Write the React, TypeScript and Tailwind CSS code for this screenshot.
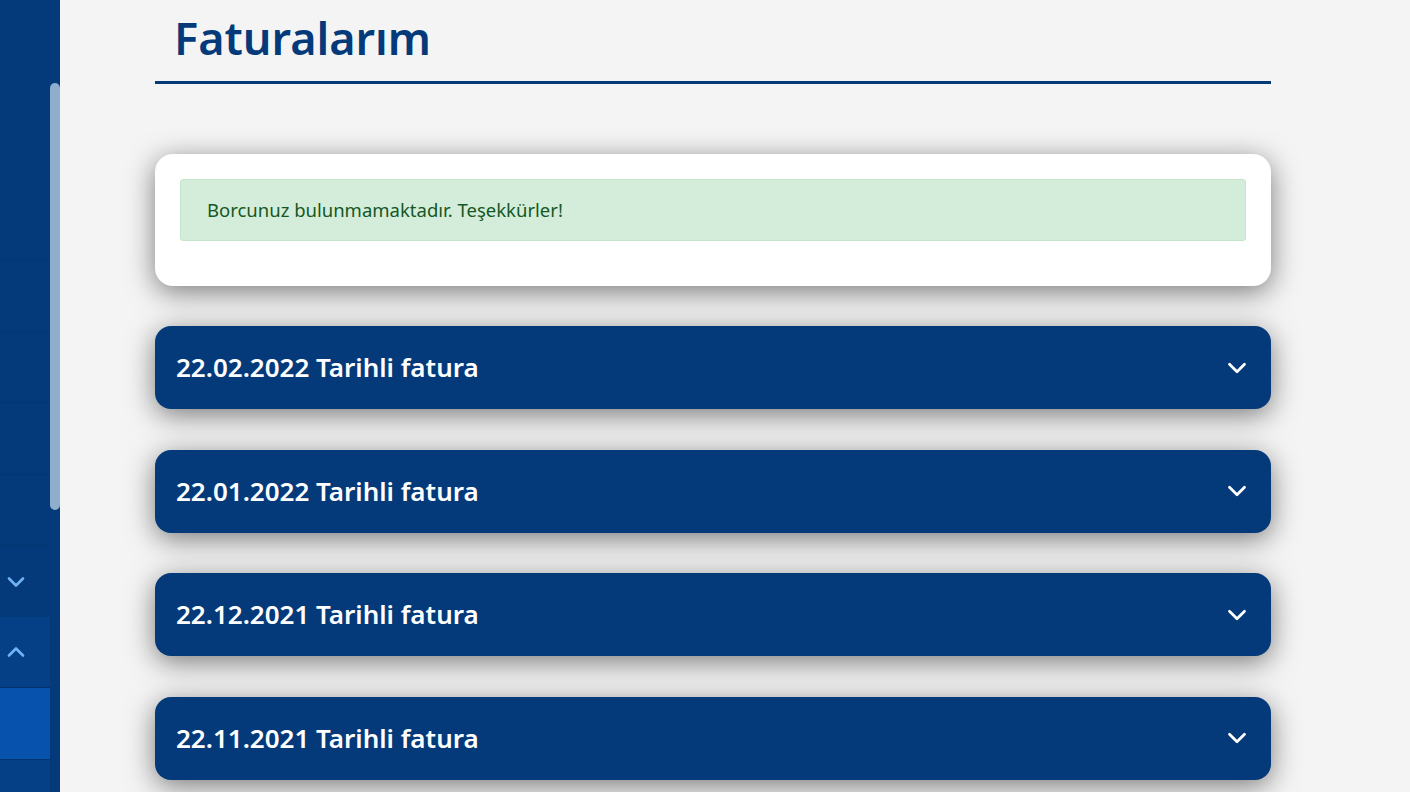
import React from "react";
import { ChevronDown, ChevronUp } from "lucide-react";

const invoices = [
  "22.02.2022 Tarihli fatura",
  "22.01.2022 Tarihli fatura",
  "22.12.2021 Tarihli fatura",
  "22.11.2021 Tarihli fatura",
];

const font = { fontFamily: '"Noto Sans", "Open Sans", sans-serif' };

const Sidebar: React.FC = () => (
  <aside className="relative h-[792px] w-[60px] shrink-0 bg-[#043a7a]">
    <div className="flex w-[50px] flex-col">
      <div className="h-[260px]" />
      <div className="h-[71px] border-t border-[#03356f]" />
      <div className="h-[71px] border-t border-[#03356f]" />
      <div className="h-[72px] border-t border-[#03356f]" />
      <div className="h-[71px] border-t border-[#03356f]" />
      {/* kapali menu */}
      <div className="flex h-[72px] items-center border-t border-[#03356f] pl-[2px]">
        <ChevronDown className="h-[28px] w-[28px] text-[#6fb2f4]" strokeWidth={2.3} />
      </div>
      {/* acik menu */}
      <div className="flex h-[70px] items-center bg-[#053f86] pl-[2px]">
        <ChevronUp className="h-[28px] w-[28px] text-[#6fb2f4]" strokeWidth={2.3} />
      </div>
      <div className="h-[72px] border-t border-[#03336c] bg-[#0652ad]" />
      <div className="h-[40px] border-t border-[#03336c] bg-[#053f86]" />
    </div>
    {/* scrollbar */}
    <div className="absolute right-0 top-[83px] h-[427px] w-[10px] rounded-full bg-[#8fadcd]" />
  </aside>
);

export default function App() {
  return (
    <div className="flex h-[792px] overflow-hidden bg-[#f4f4f4]" style={font}>
      <Sidebar />
      <main className="flex-1 pl-[95px]">
        <div className="w-[1116px]">
          <div className="border-b-[3px] border-[#043a7a] pl-[19px] pt-[5px] pb-[10px]">
            <h1 className="text-[45px] font-semibold leading-[66px] text-[#043a7a]">Faturalarım</h1>
          </div>

          <div className="mt-[70px] rounded-[18px] bg-white px-[25px] pt-[25px] pb-[45px] shadow-[0_6px_28px_rgba(0,0,0,0.5)]">
            <div className="flex h-[62px] items-center rounded-[3px] border border-[#c3e6cb] bg-[#d4edda] px-[26px] text-[18.5px] text-[#155724]">
              Borcunuz bulunmamaktadır. Teşekkürler!
            </div>
          </div>

          <div className="mt-[40px] flex flex-col gap-[40.5px]">
            {invoices.map((t) => (
              <div
                key={t}
                className="flex h-[83px] items-center justify-between rounded-[16px] bg-[#043a7a] pl-[21px] pr-[19px] shadow-[0_6px_28px_rgba(0,0,0,0.5)]"
              >
                <span className="text-[26px] font-semibold text-white">{t}</span>
                <ChevronDown className="h-[30px] w-[30px] text-white" strokeWidth={2.2} />
              </div>
            ))}
          </div>
        </div>
      </main>
    </div>
  );
}
